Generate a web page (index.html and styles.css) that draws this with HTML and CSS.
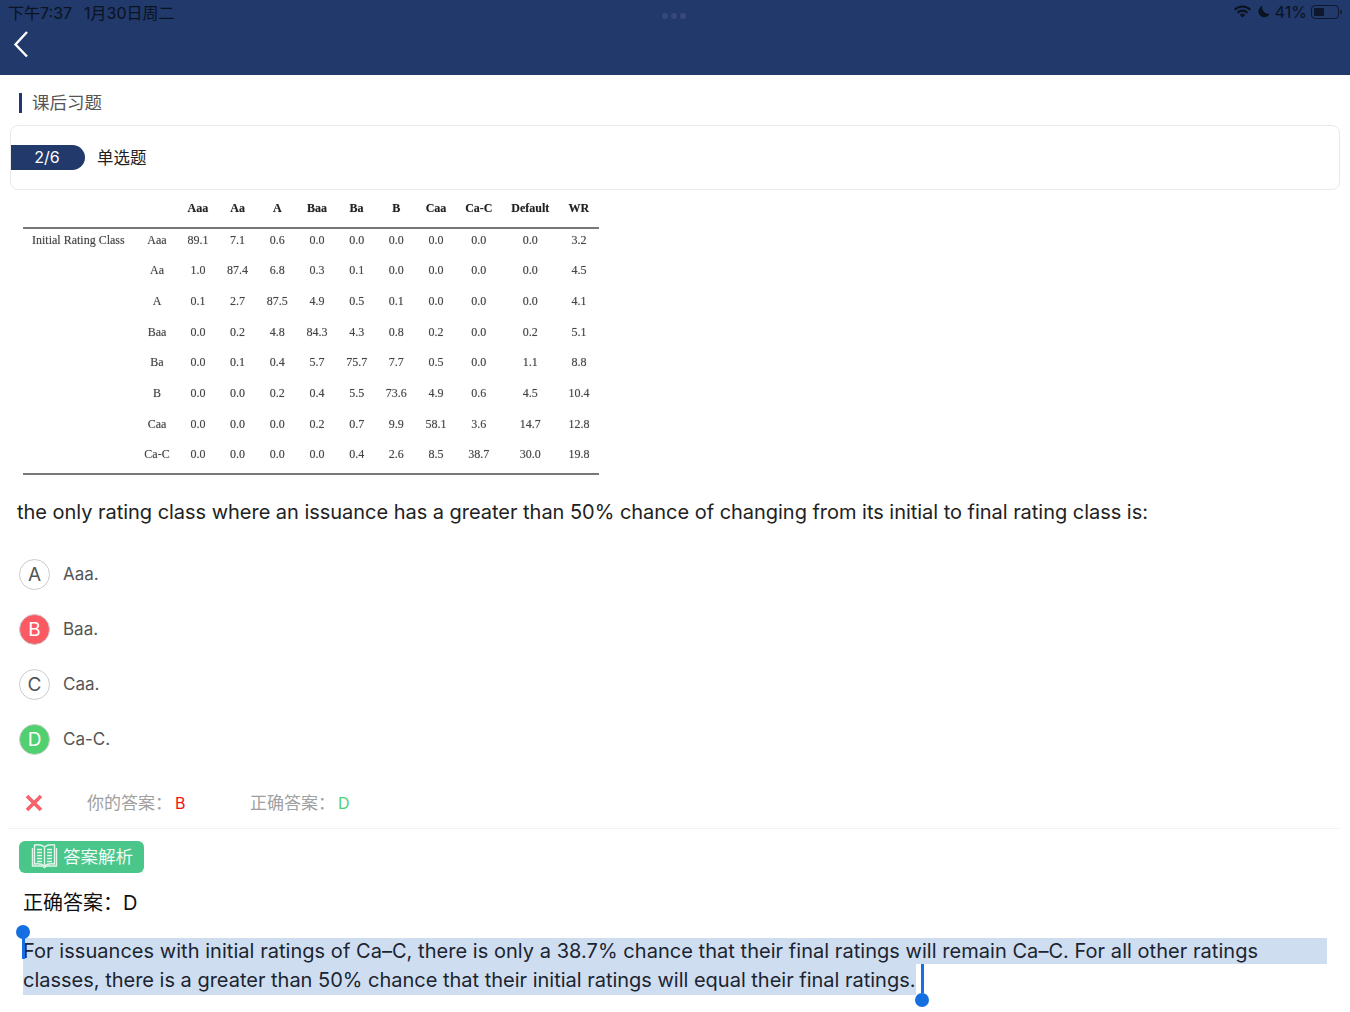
FILE: index.html
```html
<!DOCTYPE html>
<html lang="zh">
<head>
<meta charset="utf-8">
<title>课后习题</title>
<link rel="stylesheet" href="styles.css">
</head>
<body>
<header class="topbar">
  <div class="status">
    <div class="status-left"><span>下午7:37</span><span>1月30日周二</span></div>
    <div class="dots"><i></i><i></i><i></i></div>
    <div class="status-right">
      <svg class="wifi" width="17" height="13" viewBox="0 0 17 13"><path d="M8.5 12.6 5.9 9.9a3.7 3.7 0 0 1 5.2 0zM4.4 8.4 2.9 6.9a8 8 0 0 1 11.2 0l-1.5 1.5a5.8 5.8 0 0 0-8.2 0zM1.4 5.4 0 4a12 12 0 0 1 17 0l-1.4 1.4a10 10 0 0 0-14.2 0z" fill="#0b1220"/></svg>
      <svg class="moon" width="12" height="13" viewBox="0 0 13 13"><path d="M4.8.4a6.3 6.3 0 1 0 7.8 8.4A6.6 6.6 0 0 1 4.8.4z" fill="#0b1220"/></svg>
      <span class="pct">41%</span>
      <span class="battery"><span class="battery-fill"></span></span><span class="battery-tip"></span>
    </div>
  </div>
  <svg class="back" width="16" height="28" viewBox="0 0 16 28"><path d="M14 2 2.5 14.500 14 26.500" fill="none" stroke="#fff" stroke-width="2.400"/></svg>
</header>

<main>
  <h2 class="section-title">课后习题</h2>
  <section class="card"><span class="badge">2/6</span><span class="qtype">单选题</span></section>

  <table class="ratings">
    <colgroup>
      <col class="c-lead"><col class="c-class"><col class="c-n"><col class="c-n"><col class="c-n"><col class="c-n"><col class="c-n"><col class="c-n"><col class="c-n"><col class="c-cc"><col class="c-def"><col class="c-wr">
    </colgroup>
    <thead>
      <tr><th></th><th></th><th>Aaa</th><th>Aa</th><th>A</th><th>Baa</th><th>Ba</th><th>B</th><th>Caa</th><th>Ca-C</th><th>Default</th><th>WR</th></tr>
    </thead>
    <tbody>
      <tr><td class="lead">Initial Rating Class</td><td>Aaa</td><td>89.1</td><td>7.1</td><td>0.6</td><td>0.0</td><td>0.0</td><td>0.0</td><td>0.0</td><td>0.0</td><td>0.0</td><td>3.2</td></tr>
      <tr><td></td><td>Aa</td><td>1.0</td><td>87.4</td><td>6.8</td><td>0.3</td><td>0.1</td><td>0.0</td><td>0.0</td><td>0.0</td><td>0.0</td><td>4.5</td></tr>
      <tr><td></td><td>A</td><td>0.1</td><td>2.7</td><td>87.5</td><td>4.9</td><td>0.5</td><td>0.1</td><td>0.0</td><td>0.0</td><td>0.0</td><td>4.1</td></tr>
      <tr><td></td><td>Baa</td><td>0.0</td><td>0.2</td><td>4.8</td><td>84.3</td><td>4.3</td><td>0.8</td><td>0.2</td><td>0.0</td><td>0.2</td><td>5.1</td></tr>
      <tr><td></td><td>Ba</td><td>0.0</td><td>0.1</td><td>0.4</td><td>5.7</td><td>75.7</td><td>7.7</td><td>0.5</td><td>0.0</td><td>1.1</td><td>8.8</td></tr>
      <tr><td></td><td>B</td><td>0.0</td><td>0.0</td><td>0.2</td><td>0.4</td><td>5.5</td><td>73.6</td><td>4.9</td><td>0.6</td><td>4.5</td><td>10.4</td></tr>
      <tr><td></td><td>Caa</td><td>0.0</td><td>0.0</td><td>0.0</td><td>0.2</td><td>0.7</td><td>9.9</td><td>58.1</td><td>3.6</td><td>14.7</td><td>12.8</td></tr>
      <tr><td></td><td>Ca-C</td><td>0.0</td><td>0.0</td><td>0.0</td><td>0.0</td><td>0.4</td><td>2.6</td><td>8.5</td><td>38.7</td><td>30.0</td><td>19.8</td></tr>
    </tbody>
  </table>

  <p class="question">the only rating class where an issuance has a greater than 50% chance of changing from its initial to final rating class is:</p>

  <ul class="options">
    <li><span class="opt">A</span>Aaa.</li>
    <li><span class="opt wrong">B</span>Baa.</li>
    <li><span class="opt">C</span>Caa.</li>
    <li><span class="opt right">D</span>Ca-C.</li>
  </ul>

  <div class="result">
    <svg class="cross" width="18" height="18" viewBox="0 0 18 18"><path d="M2 2 16 16M16 2 2 16" stroke="#f7636c" stroke-width="3.600" fill="none"/></svg>
    <span class="res-item res-yours">你的答案：<b class="red">B</b></span>
    <span class="res-item">正确答案：<b class="green">D</b></span>
  </div>

  <div class="analysis">
    <span class="tag">
      <svg width="27" height="26" viewBox="0 0 27 26" fill="none" stroke="#e4f6ec" stroke-width="1.400">
        <path d="M13.500 4C11 2 7 1.500 3.500 2v19c3.500-.5 7.500 0 10 2 2.500-2 6.500-2.500 10-2V2c-3.500-.5-7.500 0-10 2zM13.500 4v19"/>
        <path d="M1.500 5v18h10l2 1.500 2-1.500h10V5"/>
        <path d="M6 6.500h5M6 9.500h5M6 12.500h5M6 15.500h5M6 18.500h5M16 6.500h5M16 9.500h5M16 12.500h5M16 15.500h5M16 18.500h5"/>
      </svg>答案解析</span>
    <p class="answer">正确答案：D</p>
    <div class="explain">
      <span class="handle-top"></span>
      <span class="line line-one">For issuances with initial ratings of Ca–C, there is only a 38.7% chance that their final ratings will remain Ca–C. For all other ratings</span>
      <span class="line line-two">classes, there is a greater than 50% chance that their initial ratings will equal their final ratings.<span class="handle-end"></span></span>
    </div>
  </div>
</main>
</body>
</html>
```
FILE: styles.css
```css
* { box-sizing: border-box; }
html, body { margin: 0; padding: 0; }
body {
  width: 1350px;
  height: 1012px;
  overflow: hidden;
  background: #fff;
  color: #222;
  font-family: Inter, "Noto Sans CJK SC", sans-serif;
}
.topbar { height: 75px; background: #21396b; padding: 0 8px; }
.status { display: flex; justify-content: space-between; align-items: center; height: 23px; position: relative; color: #0b1220; font-size: 16px; }
.status-left { display: flex; gap: 12px; }
.dots { position: absolute; left: 654px; top: 13px; display: flex; gap: 3px; }
.dots i { width: 6px; height: 6px; border-radius: 50%; background: #36497a; }
.status-right { display: flex; align-items: center; }
.wifi { margin-right: 7px; }
.moon { margin-right: 5px; }
.pct { margin-right: 4px; }
.battery { display: block; width: 28px; height: 14px; border: 1px solid #0b1220; border-radius: 4px; padding: 2px; opacity: .85; }
.battery-fill { display: block; width: 10px; height: 8px; background: #0b1220; border-radius: 1px; }
.battery-tip { display: block; width: 2px; height: 4px; margin-left: 1px; background: #0b1220; opacity: .6; }
.back { display: block; margin: 7px 0 0 5px; }

main { padding: 0 10px; }
.section-title { margin: 18px 0 0 9px; height: 20px; padding-left: 10px; border-left: 3px solid #21396b; font-size: 17.500px; line-height: 20px; font-weight: 400; color: #555; }
.card { display: flex; align-items: center; height: 65px; margin-top: 12px; padding-bottom: 1px; border: 1px solid #e9e9e9; border-radius: 8px; }
.badge { width: 74px; height: 25px; padding-right: 2px; background: #21396b; color: #fff; font-size: 16px; line-height: 25px; text-align: center; border-radius: 0 13px 13px 0; }
.qtype { margin-left: 12px; font-size: 16.500px; color: #222; }

.ratings { table-layout: fixed; width: 576px; margin: 3px 0 0 13px; border-collapse: collapse; border-bottom: 2px solid #777; font-family: "Liberation Serif", serif; font-size: 12px; color: #444; filter: blur(.4px); text-shadow: 0 0 1px rgba(0, 0, 0, .35); }
.ratings th { height: 35px; padding: 0 0 3px; border-bottom: 2px solid #777; color: #222; font-weight: 700; text-align: center; }
.ratings td { height: 30.700px; padding: 0; text-align: center; white-space: nowrap; }
.ratings tbody tr:first-child td { height: 27.400px; padding-bottom: 4px; }
.ratings tbody tr:last-child td { height: 34px; padding-bottom: 3.300px; }
.ratings td.lead { text-align: left; padding-left: 9px; font-weight: 400; }
.c-lead { width: 113px; }
.c-class { width: 42px; }
.c-n { width: 39.700px; }
.c-cc { width: 46px; }
.c-def { width: 57px; }
.c-wr { width: 40px; }

.question { margin: 24px 0 0 7px; font-size: 20px; line-height: 26px; color: #222; white-space: nowrap; letter-spacing: -.03px; }

.options { list-style: none; margin: 22px 0 0 9px; padding: 0; }
.options li { display: flex; align-items: center; height: 55px; font-size: 17px; color: #555; }
.opt { display: flex; align-items: center; justify-content: center; width: 31px; height: 31px; margin-right: 13px; border: 1.500px solid #ccc; border-radius: 50%; font-size: 19px; color: #555; }
.opt.wrong { background: #fb5a64; color: #fff; }
.opt.right { background: #50d06f; color: #fff; }

.result { display: flex; align-items: center; height: 50px; margin: 12px 0 0 -2px; padding-left: 17px; border-bottom: 1.500px solid #f0f3f6; font-size: 17px; color: #a0a0a0; width: 1331px; }
.cross { margin-right: 44px; }
.res-item { margin-bottom: 4px; }
.res-item b { font-size: 16px; font-weight: 400; margin-left: 3px; }
.res-yours { width: 163px; }
.red { color: #f01414; }
.green { color: #50d06f; }

.analysis { padding-left: 9px; }
.tag { display: inline-flex; align-items: center; gap: 5px; width: 125px; height: 32px; margin-top: 12px; padding: 0 0 2px 12px; background: #4bc68a; color: #f0fbf5; border-radius: 6px; font-size: 17.500px; }
.answer { margin: 15px 0 0 4px; font-size: 20px; line-height: 30px; color: #111; }
.explain { position: relative; margin: 20px 0 0 4px; width: 1304px; font-size: 20px; color: #1c2430; letter-spacing: .04px; }
.line { display: block; white-space: nowrap; background: #cedef0; }
.line-one { height: 26px; line-height: 26px; }
.line-two { width: 893px; height: 31px; line-height: 33px; position: relative; letter-spacing: -.01px; }
.handle-top { position: absolute; left: -1px; top: -5px; width: 3px; height: 26px; background: #156fe0; }
.handle-top::before { content: ""; position: absolute; left: -6px; top: -8px; width: 14px; height: 14px; background: #156fe0; border-radius: 50%; }
.handle-end { position: absolute; left: 898px; top: 0; width: 3px; height: 29px; background: #156fe0; }
.handle-end::after { content: ""; position: absolute; left: -6px; top: 29px; width: 14px; height: 14px; background: #156fe0; border-radius: 50%; }
```
